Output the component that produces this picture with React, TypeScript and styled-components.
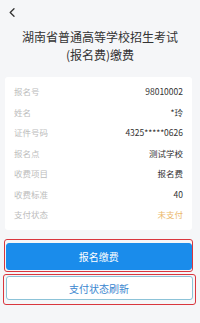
import React from 'react';
import styled, { createGlobalStyle } from 'styled-components';

const GlobalStyle = createGlobalStyle`
  html, body {
    margin: 0;
    padding: 0;
    background: #f5f6f8;
  }
  body {
    font-family: "Noto Sans CJK SC", "Noto Sans", sans-serif;
    color: #333;
  }
`;

const Page = styled.div`
  width: 200px;
  min-height: 323px;
  background: #f5f6f8;
`;

const Header = styled.div`
  height: 24px;
  display: flex;
  align-items: center;
  padding-left: 9px;
`;

const Back = styled.span`
  display: flex;
  width: 6px;
  height: 9px;
  cursor: pointer;
`;

const Title = styled.h1`
  margin: 4px 0 0;
  font-size: 12px;
  line-height: 18px;
  font-weight: 400;
  text-align: center;
  color: #333;
`;

const Card = styled.div`
  margin: 13px 8px 0 5px;
  padding: 4px 9px 5px;
  background: #fff;
  border-radius: 3px;
`;

const Row = styled.div`
  height: 20.5px;
  display: flex;
  align-items: center;
  justify-content: space-between;
  font-size: 8.5px;
`;

const Label = styled.span`
  color: #bdbdbd;
`;

const Value = styled.span<{ $warn?: boolean }>`
  color: ${(p) => (p.$warn ? '#ebb86a' : '#333')};
`;

const Highlight = styled.div<{ $pad: string; $left: number; $right: number; $top: number }>`
  margin: ${(p) => `${p.$top}px ${p.$right}px 0 ${p.$left}px`};
  padding: ${(p) => p.$pad};
  border: 1.5px solid #d9363e;
  border-radius: 3px;
`;

const Button = styled.button<{ $primary?: boolean }>`
  display: flex;
  align-items: center;
  justify-content: center;
  width: 100%;
  box-sizing: border-box;
  height: ${(p) => (p.$primary ? '26.5px' : '24px')};
  padding: 0;
  border-radius: 3px;
  border: 1px solid ${(p) => (p.$primary ? '#1a8ceb' : '#8cc3d8')};
  background: ${(p) => (p.$primary ? '#1a8ceb' : '#fff')};
  color: ${(p) => (p.$primary ? '#fff' : '#3a86cf')};
  font-family: inherit;
  font-size: 10px;
  cursor: pointer;
`;

const rows: { label: string; value: string; warn?: boolean }[] = [
  { label: '报名号', value: '98010002' },
  { label: '姓名', value: '*玲' },
  { label: '证件号码', value: '4325*****0626' },
  { label: '报名点', value: '测试学校' },
  { label: '收费项目', value: '报名费' },
  { label: '收费标准', value: '40' },
  { label: '支付状态', value: '未支付', warn: true },
];

export default function App() {
  return (
    <>
      <GlobalStyle />
      <Page>
        <Header>
          <Back>
            <svg width="6" height="9" viewBox="0 0 6 9" fill="none">
              <path d="M5 0.8L1.2 4.5L5 8.2" stroke="#333" strokeWidth="1.3" strokeLinecap="round" strokeLinejoin="round" />
            </svg>
          </Back>
        </Header>
        <Title>
          湖南省普通高等学校招生考试
          <br />
          (报名费)缴费
        </Title>
        <Card>
          {rows.map((r) => (
            <Row key={r.label}>
              <Label>{r.label}</Label>
              <Value $warn={r.warn}>{r.value}</Value>
            </Row>
          ))}
        </Card>
        <Highlight $top={9} $left={4} $right={7} $pad="3.5px 0 1px 0.5px">
          <Button $primary>报名缴费</Button>
        </Highlight>
        <Highlight $top={2} $left={3} $right={4} $pad="1.5px 2.5px 3.5px 1.5px">
          <Button>支付状态刷新</Button>
        </Highlight>
      </Page>
    </>
  );
}
